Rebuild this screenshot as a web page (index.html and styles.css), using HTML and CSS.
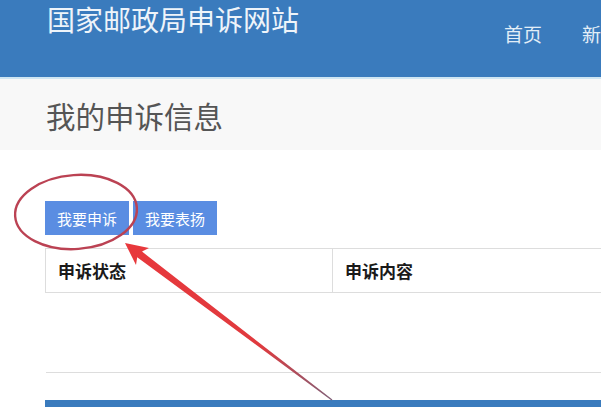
FILE: index.html
```html
<!DOCTYPE html>
<html lang="zh-CN">

<head>
    <meta charset="UTF-8">
    <title>我的申诉信息 - 国家邮政局申诉网站</title>
    <link rel="stylesheet" href="styles.css">
</head>

<body>
    <div class="page">
        <header class="topbar">
            <div class="brand">国家邮政局申诉网站</div>
            <nav class="nav">
                <a href="#">首页</a>
                <a href="#">新闻公告</a>
            </nav>
        </header>

        <div class="title-band">
            <h1>我的申诉信息</h1>
        </div>

        <main class="content">
            <div class="actions">
                <button class="btn">我要申诉</button>
                <button class="btn">我要表扬</button>
            </div>

            <table class="list">
                <thead>
                    <tr>
                        <th class="col-status">申诉状态</th>
                        <th>申诉内容</th>
                    </tr>
                </thead>
                <tbody>
                    <tr class="empty-row">
                        <td colspan="2"></td>
                    </tr>
                </tbody>
            </table>

            <div class="footer-bar"></div>
        </main>

        <!-- annotation drawn over the screenshot -->
        <svg class="annot" width="601" height="407" viewBox="0 0 601 407">
            <defs>
                <linearGradient id="arrowFill" x1="125" y1="243" x2="332" y2="400" gradientUnits="userSpaceOnUse">
                    <stop offset="0" stop-color="#e8383c"/>
                    <stop offset="0.65" stop-color="#e03a3e"/>
                    <stop offset="1" stop-color="#7f6078"/>
                </linearGradient>
            </defs>
            <ellipse cx="76" cy="212" rx="61" ry="37" transform="rotate(-4 76 212)"
                fill="none" stroke="#bb4253" stroke-width="2.4"/>
            <polygon fill="url(#arrowFill)"
                points="125,243 149,248 142,251.6 332.4,399.6 331.6,400.4 137.2,257.2 136,265"/>
        </svg>
    </div>
</body>

</html>
```

FILE: styles.css
```css
body {
    margin: 0;
    padding: 0;
    background-color: #ffffff;
    font-family: "Noto Sans CJK SC", "Liberation Sans", sans-serif;
    overflow: hidden;
}

.page {
    position: relative;
    width: 601px;
    height: 407px;
    overflow: hidden;
}

/* top bar */
.topbar {
    display: flex;
    align-items: flex-start;
    height: 77px;
    background-color: #3a7bbd;
    border-bottom: 2px solid #cfe6f3;
    white-space: nowrap;
    overflow: hidden;
}

.brand {
    flex: none;
    margin: 5px 0 0 47px;
    font-size: 28px;
    line-height: 28px;
    color: #eef4fa;
}

.nav {
    display: flex;
    gap: 40px;
    margin: 24px 0 0 205px;
}

.nav a {
    font-size: 19px;
    line-height: 19px;
    color: #e2eef7;
    text-decoration: none;
}

/* page title */
.title-band {
    height: 71px;
    background-color: #f8f8f8;
    padding: 0 0 0 46px;
    box-sizing: border-box;
}

.title-band h1 {
    margin: 0;
    padding-top: 22px;
    font-size: 29.5px;
    line-height: 29px;
    font-weight: normal;
    color: #555555;
}

/* content */
.content {
    padding: 51px 0 0 45px;
}

.actions {
    display: flex;
    gap: 4px;
}

.btn {
    height: 34px;
    padding: 0 12px;
    border: none;
    border-radius: 0;
    background-color: #5a8de2;
    color: #ffffff;
    font-family: "Noto Sans CJK SC", "Liberation Sans", sans-serif;
    font-size: 15px;
    cursor: pointer;
}

.list {
    width: 700px;
    margin-top: 13px;
    border-collapse: collapse;
}

.list th {
    height: 43px;
    padding: 0 12px;
    border: 1px solid #dddddd;
    text-align: left;
    font-size: 17px;
    font-weight: bold;
    color: #1a1a1a;
}

.list .col-status {
    width: 262px;
}

.empty-row td {
    height: 79px;
    padding: 0;
    border-bottom: 1px solid #dddddd;
}

.footer-bar {
    height: 30px;
    margin-top: 27px;
    background-color: #3a7bbd;
}

.annot {
    position: absolute;
    top: 0;
    left: 0;
    pointer-events: none;
}
```
